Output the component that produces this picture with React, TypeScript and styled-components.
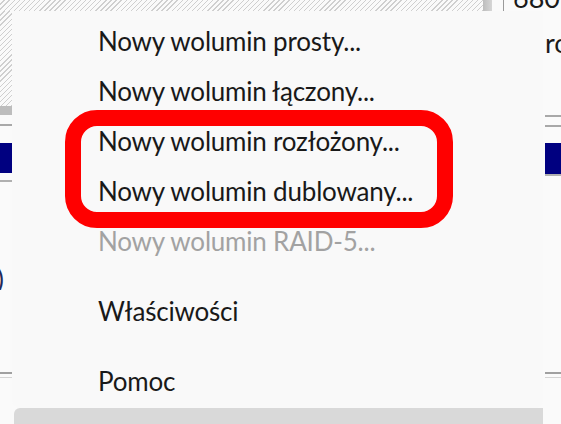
import { createGlobalStyle, styled } from 'styled-components'

const GlobalStyle = createGlobalStyle`
	html, body {
		margin: 0;
		padding: 0;
		width: 561px;
		height: 424px;
		overflow: hidden;
		background: #fafafa;
		font-family: Lato, 'Noto Sans', sans-serif;
	}
`

const hatch = `repeating-linear-gradient(-45deg, #cfcfcf 0 1px, #fafafa 1px 3.6px)`

const Page = styled.div`
	width: 561px;
	height: 424px;
	display: flex;
	flex-direction: column;
	overflow: hidden;
`

/* strip above the menu: unallocated area, scrollbar and a capacity label */
const TopRow = styled.div`
	height: 11px;
	display: flex;
	align-items: flex-end;
	overflow: hidden;
	flex-shrink: 0;
`

const Hatched = styled.div<{ $w?: number; $h?: number }>`
	width: ${(p) => (p.$w ? `${p.$w}px` : 'auto')};
	height: ${(p) => (p.$h ? `${p.$h}px` : 'auto')};
	align-self: stretch;
	flex-shrink: 0;
	background: ${hatch};
`

const Thumb = styled.div`
	width: 9px;
	align-self: stretch;
	background: linear-gradient(90deg, #bdbdbd, #d6d6d6);
`

const VLine = styled.div`
	width: 1px;
	margin-left: 11px;
	align-self: stretch;
	background: #9a9a9a;
`

const BgText = styled.span<{ $indent?: number }>`
	margin-left: ${(p) => p.$indent ?? 0}px;
	font-size: 27px;
	line-height: 27px;
	color: #1a1a1a;
	white-space: nowrap;
`

const Body = styled.div`
	display: grid;
	grid-template-columns: 12px 531px 2px 16px;
	flex: 1;
`

const SideCol = styled.div`
	display: flex;
	flex-direction: column;
	overflow: hidden;
`

const Stripe = styled.div<{ $h: number; $c?: string }>`
	height: ${(p) => p.$h}px;
	flex-shrink: 0;
	background: ${(p) => p.$c ?? 'transparent'};
`

const GlyphCell = styled.div`
	height: 22px;
	display: flex;
	justify-content: flex-end;
	align-items: center;
	width: 4px;
	overflow: hidden;
	font-size: 27px;
	line-height: 22px;
	color: #1f2a5a;
`

const TextCell = styled.div`
	height: 27px;
	display: flex;
	white-space: nowrap;
	flex-shrink: 0;
`

const MenuCol = styled.div`
	display: flex;
	flex-direction: column;
`

const Menu = styled.div`
	position: relative;
	height: 397px;
	box-sizing: border-box;
	padding-top: 5px;
	background: #f9f9f9;
	border-bottom-left-radius: 8px;
	border-bottom-right-radius: 8px;
	flex-shrink: 0;
`

const Item = styled.div<{ $disabled?: boolean }>`
	height: 50px;
	line-height: 50px;
	padding-left: 86px;
	font-size: 26px;
	letter-spacing: -0.2px;
	color: ${(p) => (p.$disabled ? '#a2a2a2' : '#191919')};
	white-space: nowrap;
`

const Separator = styled.div`
	height: 20px;
`

const MenuShadow = styled.div`
	height: 16px;
	margin-left: 2px;
	background: #d9d9d9;
	border-top-left-radius: 6px;
	flex-shrink: 0;
`

/* red annotation drawn over the two highlighted entries */
const Highlight = styled.div`
	position: absolute;
	left: 53px;
	top: 99px;
	width: 388px;
	height: 118px;
	box-sizing: border-box;
	border: 16px solid #ff0000;
	border-radius: 32px;
	pointer-events: none;
`

const items = [
	{ label: 'Nowy wolumin prosty...' },
	{ label: 'Nowy wolumin łączony...' },
	{ label: 'Nowy wolumin rozłożony...' },
	{ label: 'Nowy wolumin dublowany...' },
	{ label: 'Nowy wolumin RAID-5...', disabled: true },
]

export default function App() {
	return (
		<Page>
			<GlobalStyle />
			<TopRow>
				<Hatched $w={483} />
				<Thumb />
				<VLine />
				<BgText $indent={9}>680</BgText>
			</TopRow>
			<Body>
				<SideCol>
					<Hatched $h={95} />
					<Stripe $h={9} $c='#bdbdbd' />
					<Stripe $h={9} />
					<Stripe $h={2} $c='#a9a9a9' />
					<Stripe $h={17} />
					<Stripe $h={30} $c='#000080' />
					<Stripe $h={7} />
					<Stripe $h={2} $c='#b0b0b0' />
					<Stripe $h={86} />
					<GlyphCell>0)</GlyphCell>
					<Stripe $h={82} />
					<Stripe $h={2} $c='#a0a0a0' />
					<Stripe $h={3} />
					<Stripe $h={1} $c='#d4d4d4' />
				</SideCol>
				<MenuCol>
					<Menu>
						{items.map((it) => (
							<Item key={it.label} $disabled={it.disabled}>
								{it.label}
							</Item>
						))}
						<Separator />
						<Item>Właściwości</Item>
						<Separator />
						<Item>Pomoc</Item>
						<Highlight />
					</Menu>
					<MenuShadow />
				</MenuCol>
				<div />
				<SideCol>
					<Stripe $h={18} />
					<TextCell>
						<BgText>ro</BgText>
					</TextCell>
					<Stripe $h={59} />
					<Stripe $h={2} $c='#a8a8a8' />
					<Stripe $h={8} />
					<Stripe $h={2} $c='#a8a8a8' />
					<Stripe $h={16} />
					<Stripe $h={31} $c='#000080' />
					<Stripe $h={2} $c='#b0b0b0' />
					<Stripe $h={196} />
					<Stripe $h={2} $c='#a0a0a0' />
					<Stripe $h={3} />
					<Stripe $h={1} $c='#d4d4d4' />
				</SideCol>
			</Body>
		</Page>
	)
}
